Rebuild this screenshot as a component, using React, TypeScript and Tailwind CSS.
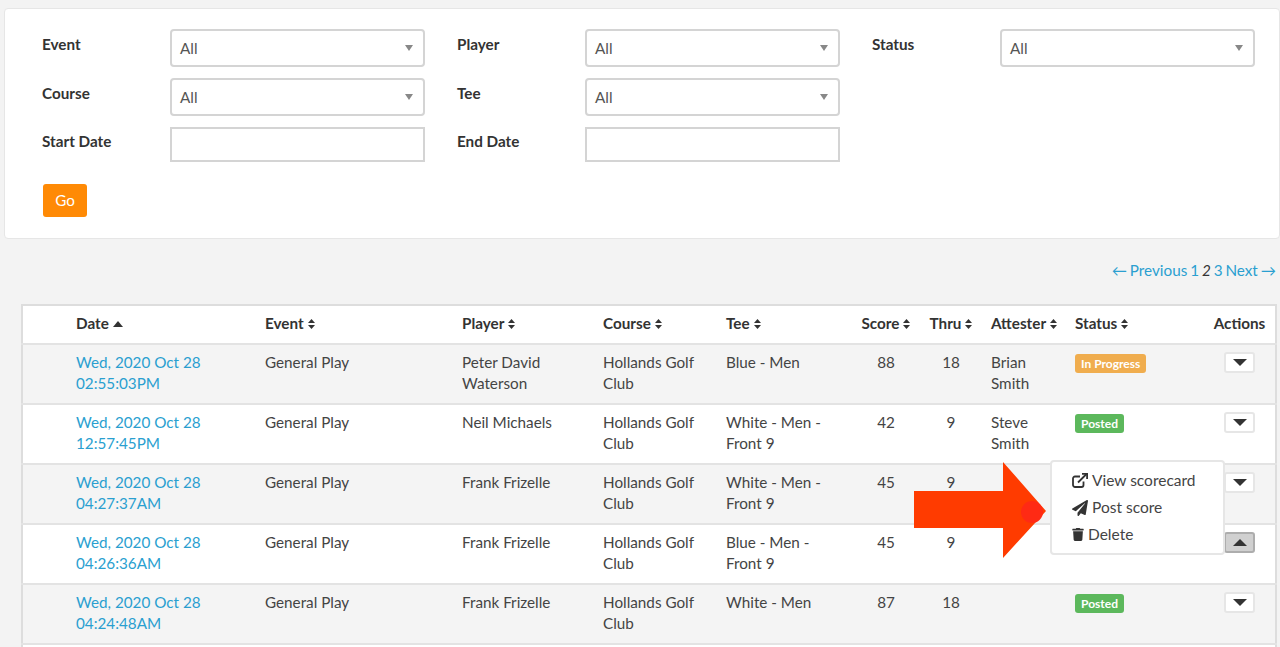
import React from 'react';
import { FaPaperPlane, FaTrash } from 'react-icons/fa';

const rows = [
  { date: 'Wed, 2020 Oct 28', time: '02:55:03PM', player: 'Peter David Waterson', tee: 'Blue - Men', score: '88', thru: '18', attester: 'Brian Smith', status: 'In Progress' },
  { date: 'Wed, 2020 Oct 28', time: '12:57:45PM', player: 'Neil Michaels', tee: 'White - Men - Front 9', score: '42', thru: '9', attester: 'Steve Smith', status: 'Posted' },
  { date: 'Wed, 2020 Oct 28', time: '04:27:37AM', player: 'Frank Frizelle', tee: 'White - Men - Front 9', score: '45', thru: '9', attester: '', status: '' },
  { date: 'Wed, 2020 Oct 28', time: '04:26:36AM', player: 'Frank Frizelle', tee: 'Blue - Men - Front 9', score: '45', thru: '9', attester: '', status: '', open: true },
  { date: 'Wed, 2020 Oct 28', time: '04:24:48AM', player: 'Frank Frizelle', tee: 'White - Men', score: '87', thru: '18', attester: '', status: 'Posted' },
];

const SortIcon = () => (
  <svg width="7" height="10" viewBox="0 0 7 10" className="inline-block ml-[4px] mb-[2px] fill-[#333]">
    <path d="M3.5 0 7 4H0z" />
    <path d="M0 6h7l-3.5 4z" />
  </svg>
);

const Caret = ({ up }: { up?: boolean }) => (
  <svg width="14" height="7" viewBox="0 0 14 7" className="fill-[#333]">
    <path d={up ? 'M7 0 14 7H0z' : 'M0 0h14L7 7z'} />
  </svg>
);

const Select = () => (
  <div className="flex h-[38px] w-[255px] shrink-0 items-center justify-between rounded-[4px] border-2 border-[#d4d4d4] bg-white pl-[8px] pr-[10px] text-[#555]">
    <span>All</span>
    <svg width="8" height="6" viewBox="0 0 8 6" className="fill-[#888]">
      <path d="M0 0h8L4 6z" />
    </svg>
  </div>
);

const Field = ({ label, children, top }: { label: string; children?: React.ReactNode; top: string }) => (
  <div className="flex w-[415px] shrink-0">
    <label className={`w-[128px] shrink-0 font-bold text-[#333] ${top}`}>{label}</label>
    {children}
  </div>
);

const Th = ({ children, className = '' }: { children?: React.ReactNode; className?: string }) => (
  <th className={`pb-[2px] font-bold text-[#333] ${className}`}>{children}</th>
);

export default function App() {
  return (
    <div className="relative h-[647px] w-[1280px] overflow-hidden bg-[#f3f3f3] text-[15.25px] leading-[21px] text-[#444] font-['Lato',sans-serif]">
      <form className="ml-[4px] mt-[8px] h-[231px] rounded-[4px] border border-[#e6e6e6] bg-white pl-[37px] pt-[20px]">
        <div className="flex h-[49px]">
          <Field label="Event" top="pt-[5px]"><Select /></Field>
          <Field label="Player" top="pt-[5px]"><Select /></Field>
          <Field label="Status" top="pt-[5px]"><Select /></Field>
        </div>
        <div className="flex h-[49px]">
          <Field label="Course" top="pt-[5px]"><Select /></Field>
          <Field label="Tee" top="pt-[5px]"><Select /></Field>
        </div>
        <div className="flex h-[57px]">
          <Field label="Start Date" top="pt-[4px]"><div className="h-[35px] w-[255px] shrink-0 border-2 border-[#d4d4d4] bg-white" /></Field>
          <Field label="End Date" top="pt-[4px]"><div className="h-[35px] w-[255px] shrink-0 border-2 border-[#d4d4d4] bg-white" /></Field>
        </div>
        <button type="button" className="ml-[1px] h-[33px] w-[44px] rounded-[3px] bg-[#ff8a05] text-white">Go</button>
      </form>

      <div className="mt-[21px] flex justify-end pr-[4px] text-[#2a9fd0] [word-spacing:-1px]">
        <span>← Previous 1 <em className="text-[#333]">2</em> 3 Next →</span>
      </div>

      <table className="ml-[21px] mt-[23px] w-[1256px] table-fixed border-collapse border-2 border-[#ddd] bg-white">
        <colgroup>
          <col className="w-[54px]" />
          <col className="w-[189px]" />
          <col className="w-[197px]" />
          <col className="w-[141px]" />
          <col className="w-[123px]" />
          <col className="w-[130px]" />
          <col className="w-[60px]" />
          <col className="w-[70px]" />
          <col className="w-[89px]" />
          <col className="w-[129px]" />
          <col className="w-[72px]" />
        </colgroup>
        <thead>
          <tr className="h-[39px] text-left">
            <Th />
            <Th>
              Date
              <svg width="10" height="6" viewBox="0 0 10 6" className="ml-[4px] mb-[2px] inline-block fill-[#333]"><path d="M5 0l5 6H0z" /></svg>
            </Th>
            <Th>Event<SortIcon /></Th>
            <Th>Player<SortIcon /></Th>
            <Th>Course<SortIcon /></Th>
            <Th>Tee<SortIcon /></Th>
            <Th className="text-center">Score<SortIcon /></Th>
            <Th className="text-center">Thru<SortIcon /></Th>
            <Th className="pl-[5px]">Attester<SortIcon /></Th>
            <Th>Status<SortIcon /></Th>
            <Th className="text-center">Actions</Th>
          </tr>
        </thead>
        <tbody>
          {rows.map((r, i) => (
            <tr key={i} className={`h-[60px] border-t-2 border-[#e3e3e3] align-top ${i % 2 === 0 ? 'bg-[#f4f4f4]' : 'bg-white'}`}>
              <td />
              <td className="pt-[7px] text-[#2a9fd0]">{r.date}<br />{r.time}</td>
              <td className="pt-[7px]">General Play</td>
              <td className="pt-[7px] pr-[10px]">{r.player}</td>
              <td className="pt-[7px] pr-[10px]">Hollands Golf Club</td>
              <td className="pt-[7px] pr-[20px]">{r.tee}</td>
              <td className="pt-[7px] text-center">{r.score}</td>
              <td className="pt-[7px] text-center">{r.thru}</td>
              <td className="pt-[7px] pl-[5px] pr-[20px]">{r.attester}</td>
              <td className="pt-[7px]">
                {r.status && (
                  <span className={`inline-block rounded-[3px] px-[6px] text-[12px] font-bold leading-[19px] text-white ${r.status === 'Posted' ? 'bg-[#5cb85c]' : 'bg-[#f0ad4e]'}`}>
                    {r.status}
                  </span>
                )}
              </td>
              <td className="pt-[7px]">
                <button type="button" className={`ml-[20px] flex h-[21px] w-[31px] items-center justify-center rounded-[3px] border-2 ${r.open ? 'border-[#adadad] bg-[#d0d0d0]' : 'border-[#e6e6e6] bg-white'}`}>
                  <Caret up={r.open} />
                </button>
              </td>
            </tr>
          ))}
          <tr className="h-[60px] border-t-2 border-[#e3e3e3]">
            <td colSpan={11} />
          </tr>
        </tbody>
      </table>

      <div className="absolute left-[1050px] top-[460px] h-[95px] w-[175px] rounded-[4px] border-2 border-[#e6e6e6] bg-white pl-[20px] pt-[5px] text-[15.5px] text-[#444]">
        <div className="flex h-[27px] items-center gap-[4px]">
          <svg width="16" height="15" viewBox="0 0 16 15" fill="none" stroke="#333" strokeWidth="1.8" className="shrink-0">
            <path d="M11.5 8.5V12a2 2 0 0 1-2 2H3a2 2 0 0 1-2-2V5.5a2 2 0 0 1 2-2h5" />
            <path d="M6 9.5 14.5 1" />
            <path d="M10 .9h5.1V6" />
          </svg>
          View scorecard
        </div>
        <div className="flex h-[27px] items-center gap-[4px]">
          <FaPaperPlane className="h-[16px] w-[16px] shrink-0 text-[#333]" />
          Post score
        </div>
        <div className="flex h-[27px] items-center gap-[4px]">
          <FaTrash className="h-[13px] w-[12px] shrink-0 text-[#333]" />
          Delete
        </div>
      </div>

      <svg width="134" height="98" viewBox="0 0 134 98" className="absolute left-[914px] top-[461px]">
        <path d="M0 30h89V1l43 49-43 47V67H0z" fill="#ff3b00" />
        <circle cx="118" cy="51" r="11" fill="#ff2a14" />
      </svg>
    </div>
  );
}
